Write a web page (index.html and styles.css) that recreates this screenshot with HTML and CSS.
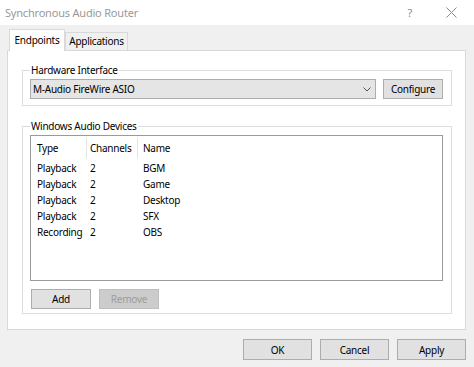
FILE: index.html
```html
<!DOCTYPE html>
<html lang="en">
<head>
  <meta charset="UTF-8">
  <title>Synchronous Audio Router</title>
  <link rel="stylesheet" href="styles.css">
</head>
<body>
  <div class="window">
    <div class="titlebar">
      <span class="title">Synchronous Audio Router</span>
      <span class="help">?</span>
      <span class="close">
        <svg width="11" height="11" viewBox="0 0 11 11"><path d="M0.5 0.5 L10.5 10.5 M10.5 0.5 L0.5 10.5" stroke="#8a8a8a" stroke-width="1" fill="none"/></svg>
      </span>
    </div>

    <div class="dialog">
      <div class="tabs">
        <div class="tab active">Endpoints</div>
        <div class="tab">Applications</div>
      </div>

      <div class="panel">
        <fieldset class="group hardware">
          <legend>Hardware Interface</legend>
          <div class="row">
            <div class="combo">
              <span>M-Audio FireWire ASIO</span>
              <svg width="8" height="5" viewBox="0 0 8 5"><path d="M0.5 0.5 L4 4 L7.5 0.5" stroke="#555" stroke-width="1" fill="none"/></svg>
            </div>
            <button class="btn configure">Configure</button>
          </div>
        </fieldset>

        <fieldset class="group devices">
          <legend>Windows Audio Devices</legend>
          <div class="list">
            <div class="list-head">
              <span class="col-type">Type</span>
              <span class="col-channels">Channels</span>
              <span class="col-name">Name</span>
            </div>
            <div class="list-row"><span class="col-type">Playback</span><span class="col-channels">2</span><span class="col-name">BGM</span></div>
            <div class="list-row"><span class="col-type">Playback</span><span class="col-channels">2</span><span class="col-name">Game</span></div>
            <div class="list-row"><span class="col-type">Playback</span><span class="col-channels">2</span><span class="col-name">Desktop</span></div>
            <div class="list-row"><span class="col-type">Playback</span><span class="col-channels">2</span><span class="col-name">SFX</span></div>
            <div class="list-row"><span class="col-type">Recording</span><span class="col-channels">2</span><span class="col-name">OBS</span></div>
          </div>
          <div class="row list-buttons">
            <button class="btn small">Add</button>
            <button class="btn small" disabled>Remove</button>
          </div>
        </fieldset>
      </div>

      <div class="footer">
        <button class="btn wide">OK</button>
        <button class="btn wide">Cancel</button>
        <button class="btn wide">Apply</button>
      </div>
    </div>
  </div>
</body>
</html>
```

FILE: styles.css
```css
body {
  margin: 0;
  background-color: #f0f0f0;
  font-family: "Noto Sans", "Open Sans", sans-serif;
  font-size: 10px;
  letter-spacing: -0.25px;
  color: #000;
}

.window {
  width: 474px;
  height: 367px;
  overflow: hidden;
}

.titlebar {
  height: 25px;
  background: #fff;
  display: flex;
  align-items: center;
  padding-left: 5px;
  box-sizing: border-box;
}

.title {
  flex: 1;
  color: #999;
  font-size: 11px;
  letter-spacing: -0.2px;
}

.help {
  color: #8a8a8a;
  font-size: 11px;
  margin-right: 34px;
}

.close {
  display: flex;
  margin-right: 17px;
}

.dialog {
  padding: 4px 8px 0 7px;
}

.tabs {
  display: flex;
  align-items: flex-end;
  height: 21px;
  padding-left: 2px;
}

.tab {
  height: 18px;
  line-height: 17px;
  box-sizing: border-box;
  border: 1px solid #d9d9d9;
  border-bottom: none;
  background: #f0f0f0;
  width: 63px;
  text-align: center;
}

.tab.active {
  height: 22px;
  line-height: 20px;
  width: 56px;
  background: #fff;
  margin-bottom: -1px;
  position: relative;
  z-index: 1;
}

.panel {
  height: 280px;
  box-sizing: border-box;
  background: #fff;
  border: 1px solid #d9d9d9;
  padding: 11px 13px 0 14px;
}

.group {
  margin: 0;
  border: 1px solid #dcdcdc;
  padding: 0 8px 6px 7px;
}

.group legend {
  padding: 0 1px;
  line-height: 16px;
}

.row {
  display: flex;
  gap: 7px;
}

.hardware .row {
  margin-top: 1px;
}

.combo {
  flex: 1;
  height: 20px;
  box-sizing: border-box;
  background: #e5e5e5;
  border: 1px solid #adadad;
  display: flex;
  align-items: center;
  justify-content: space-between;
  padding: 0 4px 0 2px;
}

.btn {
  font-family: inherit;
  font-size: 10px;
  letter-spacing: -0.25px;
  color: #000;
  background: #e1e1e1;
  border: 1px solid #adadad;
  height: 20px;
  padding: 0;
  margin: 0;
}

.configure {
  width: 60px;
}

.devices {
  margin-top: 12px;
  padding-bottom: 4px;
}

.list {
  margin-top: 1px;
  height: 146px;
  box-sizing: border-box;
  border: 1px solid #9a9a9a;
}

.list-head {
  display: flex;
  padding-top: 2px;
  height: 24px;
  box-sizing: border-box;
}

.list-head span {
  height: 20px;
  line-height: 20px;
  border-right: 1px solid #e5e5e5;
}

.list-head .col-name {
  border-right: none;
}

.list-row {
  display: flex;
  height: 16px;
  line-height: 16px;
}

.col-type {
  width: 49px;
  padding-left: 6px;
}

.col-channels {
  width: 47px;
  padding-left: 3px;
}

.list-row .col-type,
.list-row .col-channels {
  border-right: 1px solid transparent;
}

.col-name {
  padding-left: 5px;
}

.list-buttons {
  margin-top: 8px;
  padding-left: 1px;
  gap: 8px;
}

.small {
  width: 60px;
}

.btn:disabled {
  background: #cccccc;
  border-color: #bfbfbf;
  color: #9d9d9d;
}

.footer {
  display: flex;
  justify-content: flex-end;
  gap: 8px;
  margin-top: 9px;
}

.wide {
  width: 69px;
  height: 21px;
}
```
